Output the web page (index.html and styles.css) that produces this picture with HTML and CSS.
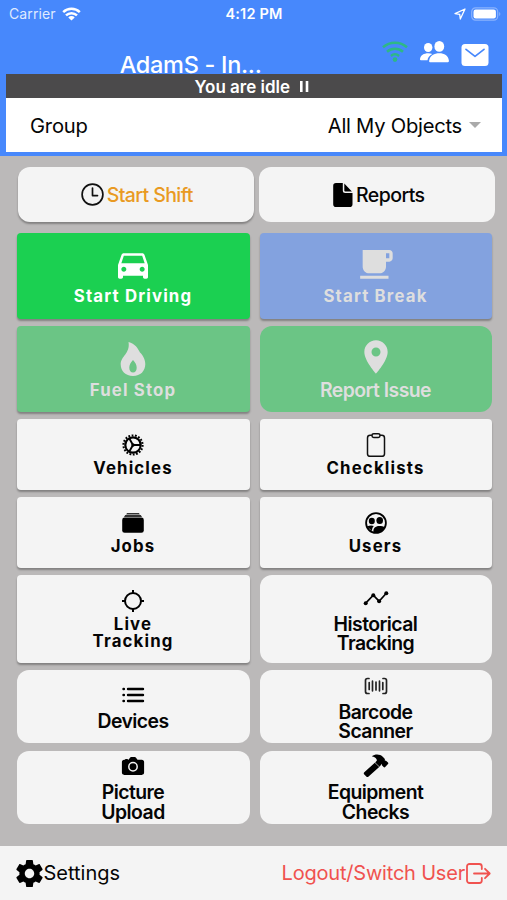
FILE: index.html
```html
<!DOCTYPE html>
<html lang="en">
<head>
<meta charset="utf-8">
<title>Driver Home</title>
<link rel="stylesheet" href="styles.css">
</head>
<body>
<div class="phone">
  <header class="header">
    <div class="status">
      <div class="status-left"><span class="carrier">Carrier</span>
        <svg width="19" height="14" viewBox="0 0 19 14" fill="none" stroke="#fff" stroke-width="2.5"><path d="M1.2 5.2a12 12 0 0 1 16.6 0M4 8.4a8 8 0 0 1 11 0"/><path d="M9.5 13.6 6.3 10.4a4.6 4.6 0 0 1 6.4 0z" fill="#fff" stroke="none"/></svg>
      </div>
      <div class="clock">4:12 PM</div>
      <div class="status-right">
        <svg width="12" height="12" viewBox="0 0 12 12" fill="none" stroke="#fff" stroke-width="1.3" stroke-linejoin="round"><path d="M11 1 1 5.6l4.7.7.6 4.7z"/></svg>
        <svg width="30" height="14" viewBox="0 0 30 14"><rect x=".7" y=".9" width="26" height="12.2" rx="3.8" fill="none" stroke="#8ab2fd" stroke-width="1.2"/><rect x="2.5" y="2.6" width="22.4" height="8.8" rx="2.2" fill="#fff"/><path d="M28.2 5v4c1.5-.7 1.5-3.3 0-4z" fill="#8ab2fd"/></svg>
      </div>
    </div>
    <div class="nav">
      <h1 class="title">AdamS - In...</h1>
      <div class="nav-icons">
        <svg class="net" width="26" height="22" viewBox="0 0 26 22" fill="none" stroke="#2eb886" stroke-width="2.5"><path d="M1 6.3a18 18 0 0 1 24 0M5 10.7a12.3 12.3 0 0 1 16 0M8.9 14.9a6.7 6.7 0 0 1 8.2 0"/><circle cx="13" cy="18.6" r="2.3" fill="#2eb886" stroke="none"/></svg>
        <svg class="people" width="29" height="22" viewBox="0 0 29 22" fill="#fff"><ellipse cx="19.3" cy="5.4" rx="4.9" ry="5.4"/><path d="M10 21.2c-.8 0-1-.8-.8-1.7.8-4.8 5-7.2 10.100-7.2s9 2.400 9.600 7.200c.1.900-.2 1.700-1 1.700z"/><ellipse cx="8.200" cy="6.500" rx="4.200" ry="4.600"/><path d="M12.300 12.900c-1.200-.5-2.600-.7-4.100-.7C3.800 12.200.5 14.300 0 18c-.1.700.2 1.200.9 1.200h6.600c.3-2.700 2-5 4.800-6.300z"/></svg>
        <svg class="mail" width="28" height="22" viewBox="0 0 28 22"><rect x=".5" y="0" width="27" height="22" rx="3.500" fill="#fff"/><path d="m5 5.300 9 7 9-7" fill="none" stroke="#4788fc" stroke-width="1.700" stroke-linecap="round" stroke-linejoin="round"/></svg>
      </div>
    </div>
    <div class="idle">You are idle&nbsp; <svg width="9" height="11" viewBox="0 0 9 11" fill="#fff"><path d="M0 0h2.600v11H0zM5.700 0h2.600v11H5.700z"/></svg></div>
    <div class="group"><span class="group-name">Group</span><span class="group-value">All My Objects</span><span class="caret"></span></div>
  </header>

  <main class="main">
    <div class="top-actions">
      <div class="pill raised"><svg width="23" height="23" viewBox="0 0 23 23" fill="none" stroke="#111" stroke-width="1.700" stroke-linecap="round" stroke-linejoin="round"><circle cx="11.500" cy="11.500" r="10.400"/><path d="M11.500 5v7.600h5"/></svg><span class="shift">Start Shift</span></div>
      <div class="pill report-pill"><svg width="20" height="24" viewBox="0 0 20 24"><path d="M3 0h6.800v7.500A2.500 2.500 0 0 0 12.300 10h7.200v11.200a2.800 2.800 0 0 1-2.800 2.800H3a2.800 2.800 0 0 1-2.800-2.800V2.800A2.800 2.800 0 0 1 3 0zM11.300.6l7.600 7.900h-6.600a1 1 0 0 1-1-1z"/></svg><span class="reports">Reports</span></div>
    </div>

    <div class="grid">
      <div class="tile wide large raised driving"><svg class="big" viewBox="0 0 24 24"><path d="M18.920 6.010C18.720 5.420 18.160 5 17.500 5h-11c-.660 0-1.210.420-1.420 1.010L3 12v7.200c0 .550.450 1 1 1h1c.550 0 1-.450 1-1v-.7h12v.7c0 .550.450 1 1 1h1c.550 0 1-.450 1-1V12l-2.080-5.990zM6.500 16c-.830 0-1.500-.670-1.500-1.500S5.670 13 6.500 13s1.500.670 1.500 1.500S7.330 16 6.500 16zm11 0c-.830 0-1.500-.670-1.500-1.500s.670-1.500 1.500-1.500 1.500.670 1.500 1.500-.670 1.500-1.500 1.500zM5 11l1.500-4.500h11L19 11H5z"/></svg><span>Start Driving</span></div>
      <div class="tile wide large raised break"><svg class="big" viewBox="0 0 24 24"><path d="M20 3H4v10c0 2.210 1.790 4 4 4h6c2.210 0 4-1.790 4-4v-3h2c1.110 0 2-.9 2-2V5c0-1.110-.890-2-2-2zm0 5h-2V5h2v3zM2.500 20.300h17v-1.900h-17v1.900z"/></svg><span>Start Break</span></div>

      <div class="tile wide large raised fuel"><svg class="big" viewBox="0 0 40 40"><path fill-rule="evenodd" d="M15.500 3c6.500 1.500 9.500 6.500 11.500 10.500 2 2 5.300 6 5.300 11.500C32.300 32 27.500 37 20 37S7.700 32 7.700 25.500c0-8.500 9.800-11 7.800-22.500zM20 21c-2.500 2.500-3.700 5-3.700 7.700 0 3 1.500 4.800 3.700 4.800s3.700-1.800 3.700-4.800c0-2.700-1.200-5.200-3.700-7.700z"/></svg><span>Fuel Stop</span></div>
      <div class="tile tight issue"><svg class="big" viewBox="0 0 24 24"><path d="M12 2C8.130 2 5 5.130 5 9c0 5.250 7 13 7 13s7-7.750 7-13c0-3.870-3.130-7-7-7zm0 9.700a2.700 2.700 0 1 1 0-5.400 2.700 2.700 0 0 1 0 5.400z"/></svg><span>Report Issue</span></div>

      <div class="tile wide raised"><svg viewBox="0 0 24 24" fill="none" stroke="#000"><circle cx="12" cy="12" r="9.600" stroke-width="2" stroke-dasharray="1.800 1.551"/><circle cx="12" cy="12" r="7.700" stroke-width="2.200"/><circle cx="12" cy="12" r="1.700" fill="#000" stroke="none"/><path d="M12.500 12h7M12 12 8.300 5.600M12 12l-3.700 6.400" stroke-width="1.900"/></svg><span>Vehicles</span></div>
      <div class="tile wide raised"><svg viewBox="0 0 24 24" fill="none" stroke="#111" stroke-width="1.500" stroke-linejoin="round"><rect x="3.500" y="2.300" width="17" height="21" rx="2.600"/><rect x="8" y=".8" width="8" height="3.700" rx="1.700" fill="#f4f4f4"/></svg><span>Checklists</span></div>

      <div class="tile wide raised"><svg viewBox="0 0 24 24"><path d="M6 2h12l.8 1.600H5.200zM4.200 4h15.600l1.200 2H3z" fill="#333"/><rect x="1.200" y="6.500" width="21.600" height="15.300" rx="2.400"/></svg><span>Jobs</span></div>
      <div class="tile wide raised"><svg viewBox="0 0 24 24"><circle cx="12" cy="12" r="9.900" fill="none" stroke="#000" stroke-width="1.800"/><ellipse cx="7.800" cy="10" rx="3" ry="3.200"/><ellipse cx="15.700" cy="9.500" rx="3.300" ry="3.500"/><path d="M3 15.500c2.500-1.300 5-1.300 7-.5-1.300 1.100-2 2.300-2 5zM9.500 21c-.6-3.700 2-6 5.700-6 2.300 0 4.300.3 5.800 1.200-2 4-6 6-11.500 4.800z"/></svg><span>Users</span></div>

      <div class="tile wide raised"><svg viewBox="0 0 24 24" fill="none" stroke="#000" stroke-width="2"><circle cx="12" cy="12" r="8"/><path d="M12 1v4M12 19v4M1 12h4M19 12h4"/></svg><span>Live<br>Tracking</span></div>
      <div class="tile tight"><svg class="trend" viewBox="0 0 26 24"><path d="m2.700 17.200 7.600-8 5.800 6 7.200-8" fill="none" stroke="#000" stroke-width="1.700"/><circle cx="2.700" cy="17.200" r="2"/><circle cx="10.300" cy="9.200" r="2"/><circle cx="16.100" cy="15.200" r="2"/><circle cx="23.300" cy="7.200" r="2"/></svg><span>Historical<br>Tracking</span></div>

      <div class="tile tight"><svg viewBox="0 0 24 24" stroke="#000" fill="none" stroke-width="2.400" stroke-linecap="round"><path d="M7 6h15M7 12h15M7 18h15M2.500 6h.4M2.500 12h.4M2.500 18h.4"/></svg><span>Devices</span></div>
      <div class="tile tight"><svg viewBox="0 0 24 24" fill="none" stroke="#222" stroke-width="1.700" stroke-linecap="round" stroke-linejoin="round"><path d="M5 4.500H3.500a2 2 0 0 0-2 2v11a2 2 0 0 0 2 2H5M19 4.500h1.500a2 2 0 0 1 2 2v11a2 2 0 0 1-2 2H19M5.200 8.500v7M8.500 7.200v9.600M12 8v8M15.500 7.200v9.600M18.800 8.500v7"/></svg><span>Barcode<br>Scanner</span></div>

      <div class="tile tight"><svg viewBox="0 0 24 24"><path fill-rule="evenodd" d="M3.200 5.800h1V5h2.600v.8h.7L9 3.700c.3-.4.700-.6 1.200-.6h3.600c.5 0 .9.200 1.200.6l1.500 2.100h4.300c1.300 0 2.300 1 2.300 2.200v10.600c0 1.300-1 2.300-2.300 2.300H3.200c-1.300 0-2.300-1-2.300-2.300V8c0-1.200 1-2.200 2.300-2.200z"/><circle cx="12" cy="12.700" r="4.200" fill="none" stroke="#f4f4f4" stroke-width="1.500"/></svg><span>Picture<br>Upload</span></div>
      <div class="tile tight"><svg class="trend" viewBox="0 0 26 24"><path d="m11.800 8.800 4.400 4.200-10.600 9.500c-.8.700-1.700.7-2.300 0l-2-2c-.7-.7-.7-1.600 0-2.300z"/><path d="M8.800 2.200C12.500-.2 17 .2 20 2.900l1.900 2-.1 1.600 1.200.2 2 1.800c.4.500.4 1 0 1.500L22.200 13c-.5.500-1.100.5-1.600 0l-1.700-1.700-.1-1.500-2.200 3-4.400-4.200 1.700-2c0-1.800-1.600-3.700-5.100-4.400z"/></svg><span>Equipment<br>Checks</span></div>
    </div>
  </main>

  <footer class="footer">
    <div class="foot-item"><svg width="27" height="27" viewBox="2 2 20 20"><path d="M19.430 12.980c.040-.320.070-.640.070-.980s-.030-.660-.070-.980l2.110-1.650c.190-.150.240-.420.120-.640l-2-3.460c-.120-.220-.390-.300-.610-.220l-2.490 1c-.520-.400-1.080-.730-1.690-.980l-.380-2.650C14.460 2.180 14.250 2 14 2h-4c-.250 0-.460.180-.490.420l-.380 2.650c-.610.250-1.170.590-1.690.980l-2.490-1c-.230-.090-.490 0-.610.220l-2 3.460c-.130.220-.070.490.120.640l2.110 1.650c-.040.320-.070.650-.070.980s.030.660.070.980l-2.110 1.650c-.190.150-.240.420-.120.640l2 3.460c.120.220.390.300.610.220l2.490-1c.520.400 1.080.730 1.690.980l.380 2.650c.030.240.240.420.490.420h4c.250 0 .460-.180.490-.420l.380-2.650c.610-.250 1.170-.590 1.690-.980l2.490 1c.230.090.490 0 .610-.220l2-3.460c.120-.220.070-.490-.120-.640l-2.110-1.650zM12 15.500c-1.930 0-3.500-1.570-3.500-3.500s1.570-3.500 3.500-3.500 3.500 1.570 3.500 3.500-1.570 3.500-3.500 3.500z"/></svg><span class="settings">Settings</span></div>
    <div class="foot-item"><span class="logout">Logout/Switch User</span><svg width="25" height="21" viewBox="0 0 25 21" fill="none" stroke="#f0524f" stroke-width="1.800" stroke-linecap="round" stroke-linejoin="round"><path d="M15.800 6V3.500a2.500 2.500 0 0 0-2.500-2.500H3.500A2.500 2.500 0 0 0 1 3.500v14A2.500 2.500 0 0 0 3.500 20h9.800a2.500 2.500 0 0 0 2.500-2.500V15M8 10.500h15.500M19 5.800l4.700 4.700-4.700 4.700"/></svg></div>
  </footer>
</div>
</body>
</html>
```
FILE: styles.css
```css
* { box-sizing: border-box; }
body { margin: 0; font-family: Inter, "Liberation Sans", sans-serif; color: #050505; }
svg { display: block; flex: none; }
.phone { width: 507px; height: 900px; display: flex; flex-direction: column; background: #bbb9b9; overflow: hidden; }

.header { height: 156px; background: #4788fc; padding: 0 5px 4px 6px; flex: none; }
.status { height: 27px; display: grid; grid-template-columns: 1fr auto 1fr; align-items: center; color: #fff; font-size: 14px; }
.status-left { display: flex; align-items: center; gap: 6px; padding-left: 3px; }
.carrier { color: #dfeaff; letter-spacing: .1px; }
.clock { font-weight: 600; font-size: 14.5px; letter-spacing: .2px; }
.status-right { display: flex; justify-content: flex-end; align-items: center; gap: 5px; padding-right: 1px; }
.nav { height: 47px; display: flex; justify-content: flex-end; }
.title { margin: 24px 120px 0 0; font-size: 23.5px; line-height: 28px; font-weight: 500; color: #fff; white-space: nowrap; letter-spacing: -.3px; }
.nav-icons { display: flex; align-items: flex-start; padding-right: 13.5px; }
.net { margin-top: 14px; margin-right: 12px; }
.people { margin-top: 14px; margin-right: 12px; }
.mail { margin-top: 17px; }
.idle { position: relative; height: 24px; background: #4b4a4b; color: #fff; display: flex; align-items: center; justify-content: center; gap: 5px; font-size: 17px; font-weight: 600; padding: 1px 4px 0 0; }
.idle svg { margin-left: 1px; }
.group { height: 54px; background: #fff; display: flex; align-items: center; padding: 0 21px 0 24px; font-size: 20.2px; letter-spacing: -.2px; }
.group-name { flex: 1; }
.group-value { letter-spacing: -.25px; }
.caret { margin-left: 7px; border: 6px solid transparent; border-top: 6px solid #aaa; border-bottom: 0; }

.main { flex: 1; padding-top: 11px; }
.top-actions { display: grid; grid-template-columns: 235.5px 235.5px; gap: 5.5px; padding-left: 18px; }
.pill { height: 54.5px; border-radius: 12px; background: #f4f4f4; display: flex; align-items: center; justify-content: center; gap: 3px; padding: 1px 0 0 2px; font-size: 19.5px; letter-spacing: -.55px; font-weight: 500; }
.shift { color: #e99a22; letter-spacing: -.6px; }
.report-pill { padding-left: 4px; }
.raised { box-shadow: 0 2px 2px rgba(0, 0, 0, .3); }
.grid { margin-top: 11.5px; padding-left: 16.5px; display: grid; grid-template-columns: 233.5px 232.5px; grid-template-rows: 86px 85.5px 71px 71px 88px 73.5px 73.5px; gap: 7.1px 9.5px; }
.tile { background: #f4f4f4; display: flex; flex-direction: column; align-items: center; justify-content: center; text-align: center; padding: 2px .5px 0 0; }
.tile svg { width: 24px; height: 24px; }
.tile svg.big { width: 40px; height: 40px; fill: currentColor; }
.tile svg.trend { width: 26px; }
.wide { border-radius: 4px; gap: 3px; font-size: 16.8px; line-height: 17px; font-weight: 700; letter-spacing: 1.15px; }
.wide svg { margin-top: -1px; }
.large { padding-top: 1px; }
.driving, .break { padding-bottom: 1.5px; }
.tight { border-radius: 12px; gap: 5px; font-size: 19.4px; line-height: 19.5px; font-weight: 600; letter-spacing: -.55px; }
.driving { background: #1bd051; color: #fff; }
.break { background: #83a2df; color: #dedede; }
.fuel, .issue { background: #6bc585; color: #dedede; }
.issue { padding-top: 0; gap: 4px; }

.footer { height: 54px; background: #f4f4f4; display: flex; align-items: center; justify-content: space-between; padding: 0 16px 0 15.5px; font-size: 20px; flex: none; }
.foot-item { display: flex; align-items: center; gap: 1px; }
.settings { letter-spacing: 0; }
.logout { color: #f0524f; letter-spacing: -.2px; }
```
